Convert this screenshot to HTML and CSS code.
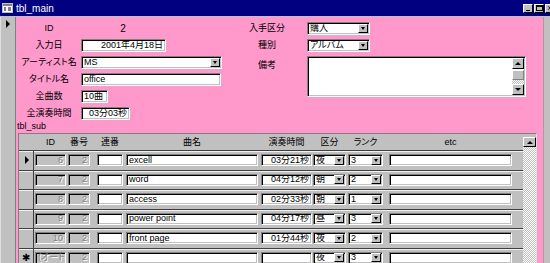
FILE: index.html
```html
<!DOCTYPE html>
<html lang="ja">
<head>
    <meta charset="UTF-8">
    <title>tbl_main</title>
    <link rel="stylesheet" href="styles.css">
</head>
<body>
<div class="window">
    <!-- Title bar -->
    <div class="titlebar">
        <svg class="ticon" width="11" height="10" viewBox="0 0 11 10">
            <rect x="0.5" y="0.5" width="10" height="9" fill="#fff" stroke="#c0c0c0"/>
            <rect x="1" y="1" width="9" height="2" fill="#808080"/>
            <path d="M2 5h2M2 7h2M6 5h3M6 7h3" stroke="#000" stroke-width="1"/>
        </svg>
        <span class="ttext">tbl_main</span>
        <div class="wbtns">
            <span class="wbtn"><i class="g-min"></i></span>
            <span class="wbtn"><i class="g-max"></i></span>
            <span class="wbtn"><i class="g-close">×</i></span>
        </div>
    </div>

    <div class="frame">
        <!-- Record selector -->
        <div class="selector"><span class="tri"></span></div>

        <!-- Main form -->
        <div class="form">
            <div class="head">
                <div class="col-left">
                    <div class="row"><span class="lbl">ID</span><span class="val">2</span></div>
                    <div class="row"><span class="lbl">入力日</span><span class="fld w-date right">2001年4月18日</span></div>
                    <div class="row"><span class="lbl">アーティスト名</span><span class="fld combo w-artist"><span class="ctext">MS</span><span class="cbtn"></span></span></div>
                    <div class="row"><span class="lbl">タイトル名</span><span class="fld w-title">office</span></div>
                    <div class="row"><span class="lbl">全曲数</span><span class="fld w-count">10曲</span></div>
                    <div class="row last"><span class="lbl">全演奏時間</span><span class="fld w-time right">03分03秒</span></div>
                </div>
                <div class="col-right">
                    <div class="row"><span class="lbl">入手区分</span><span class="fld combo w-kbn"><span class="ctext">購入</span><span class="cbtn"></span></span></div>
                    <div class="row"><span class="lbl">種別</span><span class="fld combo w-kbn"><span class="ctext">アルバム</span><span class="cbtn"></span></span></div>
                    <div class="row memo-row">
                        <span class="lbl">備考</span>
                        <div class="fld memo">
                            <div class="mscroll">
                                <span class="sbtn up"></span>
                                <span class="mthumb"></span>
                                <span class="strack"></span>
                                <span class="sbtn down"></span>
                            </div>
                        </div>
                    </div>
                </div>
            </div>

            <div class="sublabel">tbl_sub</div>

            <!-- Subform -->
            <div class="subform">
                <div class="grid">
                    <div class="ghead">
                        <span class="gsel"></span>
                        <span class="c-id">ID</span>
                        <span class="c-no">番号</span>
                        <span class="c-seq">連番</span>
                        <span class="c-name">曲名</span>
                        <span class="c-time">演奏時間</span>
                        <span class="c-kbn">区分</span>
                        <span class="c-rank">ランク</span>
                        <span class="c-etc">etc</span>
                    </div>

                    <div class="grow">
                        <span class="gsel"><span class="tri"></span></span>
                        <span class="fld dis c-id">6</span>
                        <span class="fld dis c-no">2</span>
                        <span class="fld c-seq"></span>
                        <span class="fld c-name">excell</span>
                        <span class="fld right c-time">03分21秒</span>
                        <span class="fld combo c-kbn"><span class="ctext">夜</span><span class="cbtn"></span></span>
                        <span class="fld combo c-rank"><span class="ctext">3</span><span class="cbtn"></span></span>
                        <span class="fld c-etc"></span>
                    </div>
                    <div class="grow">
                        <span class="gsel"></span>
                        <span class="fld dis c-id">7</span>
                        <span class="fld dis c-no">2</span>
                        <span class="fld c-seq"></span>
                        <span class="fld c-name">word</span>
                        <span class="fld right c-time">04分12秒</span>
                        <span class="fld combo c-kbn"><span class="ctext">朝</span><span class="cbtn"></span></span>
                        <span class="fld combo c-rank"><span class="ctext">2</span><span class="cbtn"></span></span>
                        <span class="fld c-etc"></span>
                    </div>
                    <div class="grow">
                        <span class="gsel"></span>
                        <span class="fld dis c-id">8</span>
                        <span class="fld dis c-no">2</span>
                        <span class="fld c-seq"></span>
                        <span class="fld c-name">access</span>
                        <span class="fld right c-time">02分33秒</span>
                        <span class="fld combo c-kbn"><span class="ctext">朝</span><span class="cbtn"></span></span>
                        <span class="fld combo c-rank"><span class="ctext">1</span><span class="cbtn"></span></span>
                        <span class="fld c-etc"></span>
                    </div>
                    <div class="grow">
                        <span class="gsel"></span>
                        <span class="fld dis c-id">9</span>
                        <span class="fld dis c-no">2</span>
                        <span class="fld c-seq"></span>
                        <span class="fld c-name">power point</span>
                        <span class="fld right c-time">04分17秒</span>
                        <span class="fld combo c-kbn"><span class="ctext">昼</span><span class="cbtn"></span></span>
                        <span class="fld combo c-rank"><span class="ctext">3</span><span class="cbtn"></span></span>
                        <span class="fld c-etc"></span>
                    </div>
                    <div class="grow">
                        <span class="gsel"></span>
                        <span class="fld dis c-id">10</span>
                        <span class="fld dis c-no">2</span>
                        <span class="fld c-seq"></span>
                        <span class="fld c-name">front page</span>
                        <span class="fld right c-time">01分44秒</span>
                        <span class="fld combo c-kbn"><span class="ctext">夜</span><span class="cbtn"></span></span>
                        <span class="fld combo c-rank"><span class="ctext">2</span><span class="cbtn"></span></span>
                        <span class="fld c-etc"></span>
                    </div>
                    <div class="grow">
                        <span class="gsel new">✱</span>
                        <span class="fld dis auto c-id">(オートナンバー)</span>
                        <span class="fld dis c-no">2</span>
                        <span class="fld c-seq"></span>
                        <span class="fld c-name"></span>
                        <span class="fld right c-time"></span>
                        <span class="fld combo c-kbn"><span class="ctext">夜</span><span class="cbtn"></span></span>
                        <span class="fld combo c-rank"><span class="ctext">3</span><span class="cbtn"></span></span>
                        <span class="fld c-etc"></span>
                    </div>
                </div>

                <div class="sscroll">
                    <span class="sbtn up"></span>
                    <span class="strack"></span>
                </div>
            </div>
        </div>

        <!-- Form scrollbar -->
        <div class="vscroll"></div>
    </div>
</div>
</body>
</html>
```

FILE: styles.css
```css
body {
    margin: 0;
    width: 550px;
    height: 263px;
    overflow: hidden;
    background-color: #c0c0c0;
    font-family: "Liberation Sans", "Noto Sans CJK JP", sans-serif;
    font-size: 9px;
    line-height: 11px;
    color: #000;
    font-feature-settings: "palt";
}

.window {
    display: flex;
    flex-direction: column;
    height: 263px;
}

/* Title bar */
.titlebar {
    height: 16px;
    flex: none;
    background-color: #000080;
    color: white;
    display: flex;
    align-items: center;
    padding-left: 2px;
    overflow: hidden;
}
.ticon {
    margin-right: 3px;
}
.ttext {
    font-size: 10px;
}
.wbtns {
    margin-left: auto;
    margin-right: -5px;
    display: flex;
    gap: 1px;
}
.wbtn {
    width: 10px;
    height: 9px;
    box-sizing: border-box;
    background-color: #c0c0c0;
    border: 1px solid;
    border-color: #fff #000 #000 #fff;
    position: relative;
    display: flex;
    align-items: center;
    justify-content: center;
}
.g-min {
    width: 4px;
    height: 1px;
    background-color: #000;
    margin-top: 4px;
}
.g-max {
    width: 5px;
    height: 3px;
    border: 1px solid #000;
    border-top-width: 2px;
}
.g-close {
    font-style: normal;
    font-size: 9px;
    line-height: 7px;
    color: #000;
}

.frame {
    flex: 1;
    display: flex;
    border-top: 1px solid #c0c0c0;
    min-height: 0;
}

/* Record selector of the main form */
.selector {
    width: 16px;
    flex: none;
    box-sizing: border-box;
    background-color: #c0c0c0;
    border-left: 1px solid #dfdfdf;
    border-right: 1px solid #808080;
    padding: 3px 0 0 5px;
}
.tri {
    display: block;
    width: 0;
    height: 0;
    border-top: 4px solid transparent;
    border-bottom: 4px solid transparent;
    border-left: 4px solid #000;
}

.vscroll {
    width: 7px;
    flex: none;
    box-sizing: border-box;
    background-color: #c0c0c0;
    border-left: 1px solid #a0a0a0;
}

/* Main form */
.form {
    flex: 1;
    background-color: #ff99cc;
    overflow: hidden;
    display: flex;
    flex-direction: column;
}

.head {
    display: flex;
    padding-top: 5px;
}
.col-left {
    width: 226px;
    flex: none;
}
.col-right {
    flex: 1;
}
.row {
    display: flex;
    align-items: center;
    height: 13px;
    margin-bottom: 4px;
}
.row.last {
    margin-bottom: 0;
}
.lbl {
    width: 58px;
    margin-left: 4px;
    margin-right: 3px;
    text-align: center;
    white-space: nowrap;
}
.col-right .lbl {
    width: 50px;
    margin-left: 0;
    margin-right: 15px;
}
.val {
    width: 84px;
    text-align: center;
    font-size: 10px;
}

/* Sunken text boxes */
.fld {
    display: flex;
    align-items: center;
    box-sizing: border-box;
    height: 13px;
    padding: 0 2px;
    background-color: white;
    border: 1px solid;
    border-color: #808080 #fff #fff #808080;
    box-shadow: inset 1px 1px #000, inset -1px -1px #c0c0c0;
    white-space: nowrap;
    overflow: hidden;
}
.fld.right {
    justify-content: flex-end;
}
.w-date { width: 85px; }
.w-artist { width: 141px; }
.w-title { width: 140px; }
.w-count { width: 27px; }
.w-time { width: 49px; }
.w-kbn { width: 63px; }

.combo {
    padding-right: 1px;
}
.ctext {
    flex: 1;
    overflow: hidden;
}
.cbtn {
    flex: none;
    width: 10px;
    height: 9px;
    box-sizing: border-box;
    background-color: #c0c0c0;
    border: 1px solid;
    border-color: #fff #000 #000 #fff;
    display: flex;
    align-items: center;
    justify-content: center;
}
.cbtn::after {
    content: "";
    border-left: 2px solid transparent;
    border-right: 2px solid transparent;
    border-top: 3px solid #000;
}

/* Memo box */
.memo-row {
    align-items: flex-start;
    height: 41px;
    margin-top: 2px;
    margin-bottom: 0;
}
.memo-row .lbl {
    padding-top: 4px;
}
.memo {
    width: 219px;
    height: 41px;
    padding: 1px;
    justify-content: flex-end;
    align-items: stretch;
}
.mscroll {
    width: 12px;
    display: flex;
    flex-direction: column;
}
.sbtn {
    flex: none;
    height: 11px;
    box-sizing: border-box;
    background-color: #c0c0c0;
    border: 1px solid;
    border-color: #fff #000 #000 #fff;
    display: flex;
    align-items: center;
    justify-content: center;
}
.sbtn.up::after {
    content: "";
    border-left: 3px solid transparent;
    border-right: 3px solid transparent;
    border-bottom: 3px solid #000;
}
.sbtn.down::after {
    content: "";
    border-left: 3px solid transparent;
    border-right: 3px solid transparent;
    border-top: 3px solid #000;
}
.mthumb {
    flex: none;
    height: 10px;
    margin-top: 1px;
    box-sizing: border-box;
    background-color: #c0c0c0;
    border: 1px solid;
    border-color: #fff #808080 #808080 #fff;
}
.strack {
    flex: 1;
    background: repeating-conic-gradient(#c0c0c0 0 25%, #fff 0 50%) 0 0 / 2px 2px;
}

.sublabel {
    height: 11px;
    margin-top: 1px;
    padding-left: 1px;
}

/* Subform */
.subform {
    flex: 1;
    display: flex;
    width: 519px;
    margin: 1px 0 0 2px;
    box-sizing: border-box;
    background-color: #c0c0c0;
    border-top: 1px solid #808080;
    border-left: 1px solid #808080;
    border-right: 1px solid #dfdfdf;
}
.grid {
    flex: 1;
}
.sscroll {
    width: 13px;
    flex: none;
    display: flex;
    flex-direction: column;
    padding-top: 3px;
}
.sscroll .sbtn {
    height: 10px;
}

.ghead {
    display: flex;
    align-items: center;
    height: 16px;
}
.ghead span {
    text-align: center;
    white-space: nowrap;
}
.grow {
    display: flex;
    align-items: center;
    height: 19.5px;
    box-sizing: border-box;
    border-top: 1px solid #404040;
    box-shadow: inset 0 1px #f0f0f0;
}
.gsel {
    flex: none;
    width: 15px;
    align-self: stretch;
    box-sizing: border-box;
    display: flex;
    align-items: center;
    justify-content: center;
}
.grow .gsel {
    border-right: 1px solid #404040;
}
.gsel .tri {
    margin-left: 1px;
}
.gsel.new {
    font-size: 10px;
}
.grow .fld {
    height: 12px;
}

.c-id { width: 31px; margin-left: 1px; }
.c-no { width: 22px; margin-left: 2px; }
.c-seq { width: 26px; margin-left: 7px; }
.c-name { width: 132px; margin-left: 3px; }
.c-time { width: 51px; margin-left: 3px; }
.c-kbn { width: 33px; margin-left: 1px; }
.c-rank { width: 35px; margin-left: 2px; }
.c-etc { width: 123px; margin-left: 6px; }

.fld.dis {
    background-color: #c0c0c0;
    color: #808080;
    text-shadow: 1px 1px 0 #fff;
    justify-content: flex-end;
}
.fld.dis.auto {
    justify-content: flex-start;
}
```
